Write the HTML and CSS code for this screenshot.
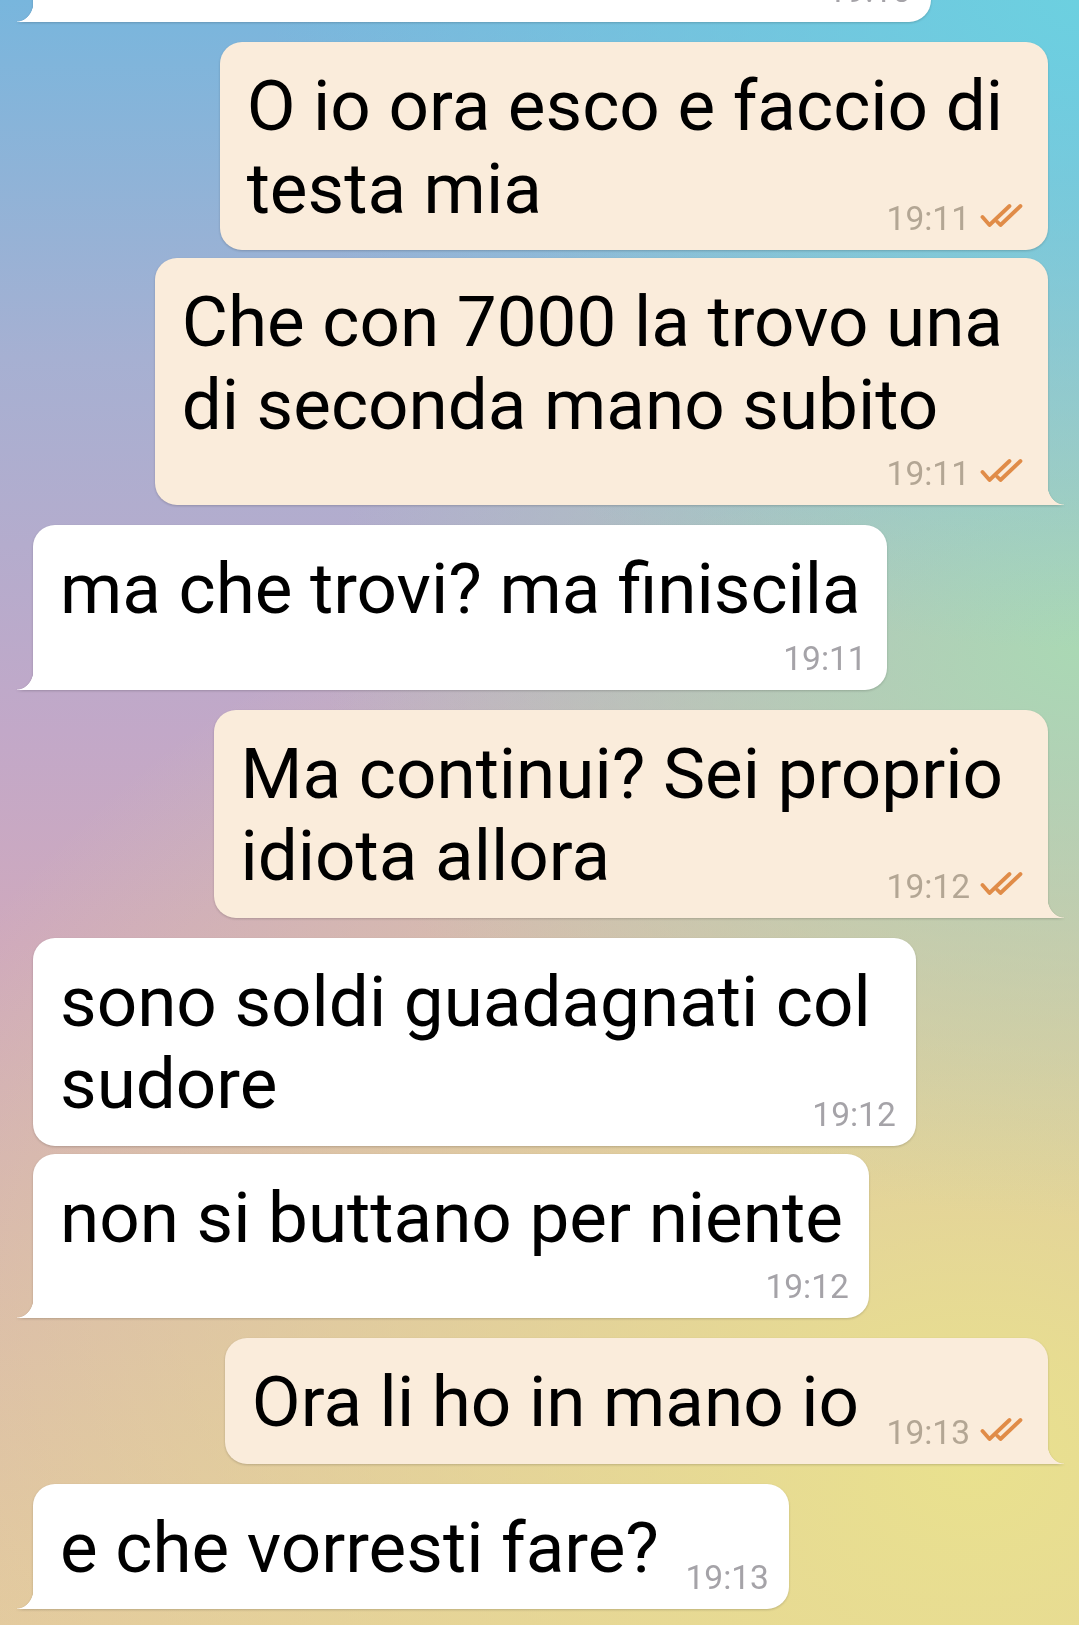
FILE: index.html
```html
<!DOCTYPE html>
<html lang="it">
<head>
  <meta charset="UTF-8">
  <title>Chat</title>
  <meta name="viewport" content="width=device-width, initial-scale=1.0">
  <link rel="stylesheet" href="styles.css">
</head>
<body>
  <div class="chat">

    <div class="bubble in tail cut">
      <div class="meta"><span class="time">19:10</span></div>
    </div>

    <div class="bubble out multi new">
      <p class="text"><span class="words">O io ora esco e faccio di<br>testa mia</span><i class="spacer"></i></p>
      <div class="meta"><span class="time">19:11</span><svg class="ticks" viewBox="0 0 48 26"><path d="M3 14 L10 22 L30 3 M18 19 L21 22 L41 3"/></svg></div>
    </div>

    <div class="bubble out multi tail">
      <p class="text"><span class="words">Che con 7000 la trovo una<br>di seconda mano subito</span><br><i class="spacer"></i></p>
      <div class="meta"><span class="time">19:11</span><svg class="ticks" viewBox="0 0 48 26"><path d="M3 14 L10 22 L30 3 M18 19 L21 22 L41 3"/></svg></div>
    </div>

    <div class="bubble in tail new">
      <p class="text"><span class="words">ma che trovi? ma finiscila</span><br><i class="spacer"></i></p>
      <div class="meta"><span class="time">19:11</span></div>
    </div>

    <div class="bubble out multi tail new">
      <p class="text"><span class="words">Ma continui? Sei proprio<br>idiota allora</span><i class="spacer"></i></p>
      <div class="meta"><span class="time">19:12</span><svg class="ticks" viewBox="0 0 48 26"><path d="M3 14 L10 22 L30 3 M18 19 L21 22 L41 3"/></svg></div>
    </div>

    <div class="bubble in multi new">
      <p class="text"><span class="words">sono soldi guadagnati col<br>sudore</span><i class="spacer"></i></p>
      <div class="meta"><span class="time">19:12</span></div>
    </div>

    <div class="bubble in tail">
      <p class="text"><span class="words">non si buttano per niente</span><br><i class="spacer"></i></p>
      <div class="meta"><span class="time">19:12</span></div>
    </div>

    <div class="bubble out tail new">
      <p class="text"><span class="words">Ora li ho in mano io</span><i class="spacer"></i></p>
      <div class="meta"><span class="time">19:13</span><svg class="ticks" viewBox="0 0 48 26"><path d="M3 14 L10 22 L30 3 M18 19 L21 22 L41 3"/></svg></div>
    </div>

    <div class="bubble in tail new">
      <p class="text"><span class="words">e che vorresti fare?</span><i class="spacer"></i></p>
      <div class="meta"><span class="time">19:13</span></div>
    </div>

  </div>
</body>
</html>
```

FILE: styles.css
```css
html, body {
  margin: 0;
  height: 100%;
}

body {
  font-family: Roboto, "Noto Sans", sans-serif;
  overflow: hidden;
  background:
    radial-gradient(ellipse 75% 40% at 100% 0%, rgba(108, 208, 224, 1) 0%, rgba(108, 208, 224, 0) 100%),
    radial-gradient(ellipse 70% 35% at 100% 40%, rgba(170, 216, 180, 1) 0%, rgba(170, 216, 180, 0) 100%),
    radial-gradient(ellipse 110% 60% at 90% 90%, rgba(233, 225, 142, 1) 0%, rgba(233, 225, 142, 0) 100%),
    linear-gradient(180deg, #78b6dd 0%, #a6b0d2 22%, #c2a8c8 45%, #cfa9bd 58%, #d9b8ae 80%, #e2c6a2 100%);
}

.chat {
  display: flex;
  flex-direction: column;
  gap: 8px;
  padding: 0 31px 0 33px;
}

.bubble {
  position: relative;
  border-radius: 22px;
  padding: 23px 20px 20px 27px;
  filter: drop-shadow(0 1px 1px rgba(0, 0, 0, 0.18));
}

.out {
  align-self: flex-end;
  background: #faecdb;
}

.in {
  align-self: flex-start;
  background: #fff;
}

.new {
  margin-top: 12px;
}

/* font-size 0 so a line holding only the spacer stays short */
.text {
  margin: 0;
  font-size: 0;
  line-height: 0;
  padding-right: 6px;
  white-space: nowrap;
}

.multi .text {
  padding-right: 25px;
}

.words {
  font-size: 71px;
  line-height: 82.5px;
  color: #000;
}

.spacer {
  display: inline-block;
  width: 86px;
  height: 39px;
  margin-left: 18px;
}

.out .spacer {
  width: 145px;
}

.meta {
  height: 39px;
  margin: -31px 0 -8px;
  text-align: right;
  font-size: 33.5px;
  line-height: 39px;
  white-space: nowrap;
}

.time {
  color: #a5a3a8;
}

.out .time {
  color: #b3a694;
}

.ticks {
  width: 49px;
  height: 26px;
  margin-left: 9px;
  vertical-align: 1px;
  fill: none;
  stroke: #e08c48;
  stroke-width: 3.8;
  stroke-linecap: round;
  stroke-linejoin: round;
}

.tail.out {
  border-bottom-right-radius: 0;
}

.tail.in {
  border-bottom-left-radius: 0;
}

.tail::after {
  content: '';
  position: absolute;
  bottom: 0;
  width: 17px;
  height: 21px;
}

.tail.out::after {
  right: -16px;
  background: radial-gradient(ellipse 17px 21px at 100% 0, rgba(250, 236, 219, 0) 96%, #faecdb 100%);
}

.tail.in::after {
  left: -16px;
  background: radial-gradient(ellipse 17px 21px at 0 0, rgba(255, 255, 255, 0) 96%, #fff 100%);
}

.cut {
  width: 898px;
  height: 126px;
  box-sizing: border-box;
  margin-top: -104px;
  display: flex;
  flex-direction: column;
  justify-content: flex-end;
}
```
